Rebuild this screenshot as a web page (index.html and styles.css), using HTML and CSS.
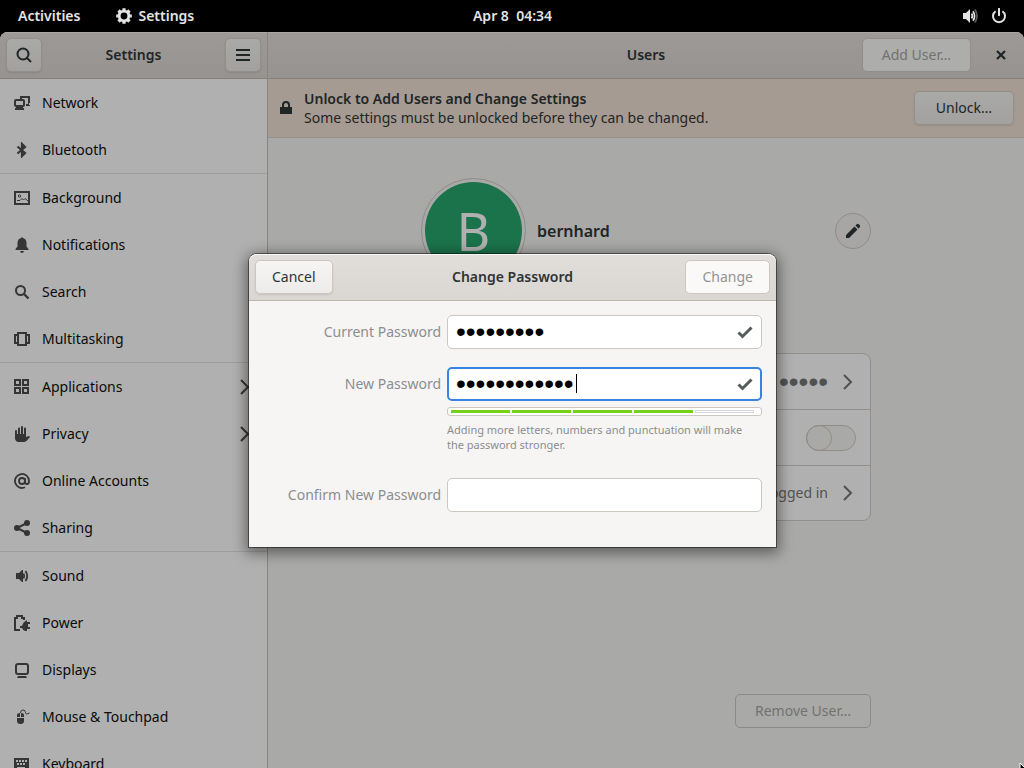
FILE: index.html
```html
<!DOCTYPE html>
<html lang="en">
<head>
<meta charset="utf-8">
<title>Settings – Users</title>
<link rel="stylesheet" href="styles.css">
</head>
<body>
<div class="topbar">
  <div class="topbar-side">
    <button class="shell-button">Activities</button>
    <button class="shell-button shell-app">
      <svg class="icon" viewBox="0 0 16 16"><g stroke="currentColor" stroke-width="3.2"><path d="M8 0.2v15.6M0.2 8h15.6M2.5 2.5l11 11M13.500 2.500l-11 11"/></g><circle cx="8" cy="8" r="6.200" fill="currentColor"/><circle cx="8" cy="8" r="3.400" fill="#000"/></svg>
      Settings
    </button>
  </div>
  <button class="shell-button clock">Apr 8&nbsp; 04:34</button>
  <div class="topbar-side topbar-status">
    <svg class="icon" viewBox="0 0 16 16"><path fill="currentColor" d="M1 5h3l4-4v14l-4-4H1z"/><g fill="none" stroke="currentColor" stroke-width="1.700"><path d="M9.600 5.500q1.600 2.500 0 5"/><path d="M11 3.200q3.200 4.800 0 9.600"/><path opacity=".4" d="M13 1.500q4 6.500 0 13"/></g></svg>
    <svg class="icon" viewBox="0 0 16 16"><g fill="none" stroke="currentColor" stroke-width="2"><path d="M4.600 3.200a6 6 0 1 0 6.800 0"/><path d="M8 .8v6.400" stroke-linecap="round"/></g></svg>
  </div>
</div>

<div class="window">
  <nav class="sidebar">
    <div class="headerbar sidebar-header">
      <button class="button icon-button" aria-label="Search"><svg class="icon" viewBox="0 0 16 16"><g fill="none" stroke="currentColor" stroke-width="2"><circle cx="7" cy="7" r="5.500"/><path d="M11 11l4 4"/></g></svg></button>
      <h1 class="title">Settings</h1>
      <button class="button icon-button" aria-label="Menu"><svg class="icon" viewBox="0 0 16 16"><path fill="currentColor" d="M1 2h14v2H1zM1 7h14v2H1zM1 12h14v2H1z"/></svg></button>
    </div>
    <div class="panels">
      <div class="group">
        <a class="panel" href="#"><svg class="icon" viewBox="0 0 16 16"><path fill="currentColor" d="M6 1h10v7h-1v2h1v1h-4V9h2V3H8v1H6zM2 4h7q2 0 2 2v4q0 2-2 2v1h1v2H1v-2h1v-1q-2 0-2-2V6q0-2 2-2zm0 2v4h7V6z"/></svg>Network</a>
        <a class="panel" href="#"><svg class="icon" viewBox="0 0 16 16"><path fill="none" stroke="currentColor" stroke-width="2.200" d="M3.500 4.500L11 11 8 14V2l3 3-7.500 6.500"/></svg>Bluetooth</a>
      </div>
      <div class="group">
        <a class="panel" href="#"><svg class="icon" viewBox="0 0 16 16"><path fill="none" stroke="currentColor" stroke-width="2" d="M1 2h14v12H1z"/><circle cx="5.500" cy="6" r="1.200" fill="none" stroke="currentColor"/><path fill="none" stroke="currentColor" d="M3 10.500h3l2-2 1.500 1.500L11 8.500l3 2.500"/></svg>Background</a>
        <a class="panel" href="#"><svg class="icon" viewBox="0 0 16 16"><path fill="currentColor" d="M7 1q1-1.500 2 0 3.500 1 3.500 5v3.500L14.500 12v1h-13v-1l2-2.500V6q0-4 3.500-5zM6 14h4q-.5 2-2 2t-2-2z"/></svg>Notifications</a>
        <a class="panel" href="#"><svg class="icon" viewBox="0 0 16 16"><g fill="none" stroke="currentColor" stroke-width="2"><circle cx="6.500" cy="6.500" r="4.500"/><path stroke-width="2.400" d="M10 10l4.500 4.500"/></g></svg>Search</a>
        <a class="panel" href="#"><svg class="icon" viewBox="0 0 16 16"><path fill="none" stroke="currentColor" stroke-width="2" d="M4 2h8v12H4zM3 4H1v8h2M13 4h2v8h-2"/></svg>Multitasking</a>
      </div>
      <div class="group">
        <a class="panel" href="#"><svg class="icon" viewBox="0 0 16 16"><path fill="none" stroke="currentColor" stroke-width="2" d="M1 1h5v5H1zM9 1h5v5H9zM1 9h5v5H1zM9 9h5v5H9z"/></svg>Applications<svg class="icon chevron" viewBox="0 0 16 16"><path d="M4 1l7 7-7 7"/></svg></a>
        <a class="panel" href="#"><svg class="icon" viewBox="0 0 16 16"><g stroke="currentColor" stroke-width="2" stroke-linecap="round"><path d="M2 5v7M5 2.500V10M8 1v9M11 2.500V10"/></g><path fill="currentColor" d="M1 8h11v3l3-1 1 1-3.500 4-2 1H4q-3-1-3-4z"/></svg>Privacy<svg class="icon chevron" viewBox="0 0 16 16"><path d="M4 1l7 7-7 7"/></svg></a>
        <a class="panel" href="#"><svg class="icon" viewBox="0 0 16 16"><g fill="none" stroke="currentColor" stroke-width="1.800"><circle cx="8" cy="8" r="3"/><path d="M11 5v4q0 2 2 2t2-3a7 7 0 1 0-4 6.300"/></g></svg>Online Accounts</a>
        <a class="panel" href="#"><svg class="icon" viewBox="0 0 16 16"><g fill="currentColor"><circle cx="3" cy="8" r="3"/><circle cx="13" cy="3" r="3"/><circle cx="13" cy="13" r="3"/></g><path fill="none" stroke="currentColor" stroke-width="2" d="M13 3L3 8l10 5"/></svg>Sharing</a>
      </div>
      <div class="group">
        <a class="panel" href="#"><svg class="icon" viewBox="0 0 16 16"><path fill="currentColor" d="M2 5h3l3-3h1v12H8l-3-3H2z"/><g fill="none" stroke="currentColor" stroke-width="1.800"><path d="M9.500 5.500q1.400 2.500 0 5"/><path d="M11.500 3q3.400 5 0 10"/></g></svg>Sound</a>
        <a class="panel" href="#"><svg class="icon" viewBox="0 0 16 16"><path fill="none" stroke="currentColor" stroke-width="2" d="M6 15H1V3h2V1h5v2h2v2"/><path fill="currentColor" d="M13 5v2h3v2h-2v3h2v2h-3v2h-2q-2-.5-3-3H6v-2h2q1-4 5-6z"/></svg>Power</a>
        <a class="panel" href="#"><svg class="icon" viewBox="0 0 16 16"><rect x="2" y="2" width="12" height="10" rx="2" fill="none" stroke="currentColor" stroke-width="2"/><path fill="currentColor" d="M4 14h8l1 2H3z"/></svg>Displays</a>
        <a class="panel" href="#"><svg class="icon" viewBox="0 0 16 16"><path fill="currentColor" d="M3 8V6q0-2 3-2v4zM7 4q3 0 3 2v2H7zM3 9h7v3q0 3-3.500 3T3 12z"/><path fill="none" stroke="currentColor" d="M6.500 4q0-3 2.500-3t2.500 2.500 4 .5"/></svg>Mouse &amp; Touchpad</a>
        <a class="panel" href="#"><svg class="icon" viewBox="0 0 16 16"><path fill="currentColor" fill-rule="evenodd" d="M0 2h15v12H0zM2 4v2h2V4zm3 0v2h2V4zm3 0v2h2V4zm3 0v2h2V4zM3 7v2h2V7zm3 0v2h2V7zm3 0v2h2V7zm-6 4v1h8v-1z"/></svg>Keyboard</a>
      </div>
    </div>
  </nav>

  <main class="main">
    <div class="headerbar main-header">
      <h1 class="title">Users</h1>
      <div class="header-end">
        <button class="button wide" disabled>Add User…</button>
        <button class="close" aria-label="Close"><svg class="icon" viewBox="0 0 16 16"><path fill="none" stroke="currentColor" stroke-width="2.200" d="M4 4l8 8M12 4l-8 8"/></svg></button>
      </div>
    </div>
    <div class="banner">
      <svg class="icon" viewBox="0 0 16 16"><path fill="currentColor" d="M2 7h12v7H2z"/><path fill="none" stroke="currentColor" stroke-width="2" d="M5 8V5q0-3 3-3t3 3v3"/></svg>
      <div class="banner-text">
        <strong>Unlock to Add Users and Change Settings</strong>
        <span>Some settings must be unlocked before they can be changed.</span>
      </div>
      <button class="button unlock">Unlock…</button>
    </div>
    <div class="content">
      <div class="user">
        <div class="avatar"><span class="avatar-disc">B</span></div>
        <h2 class="user-name">bernhard</h2>
        <button class="edit" aria-label="Edit name"><svg class="icon" viewBox="0 0 16 16"><path fill="currentColor" d="M1 12l8.500-8.500 3 3L4 15H1zM10.500 2.500L12 1q1-.6 2 .4l.6.600q1 1 .4 2L13.500 5.500z"/></svg></button>
      </div>
      <div class="card">
        <button class="row" aria-label="Password"><span class="dots">•••••</span><svg class="icon chevron" viewBox="0 0 16 16"><path d="M4 1l7 7-7 7"/></svg></button>
        <div class="row"><input class="switch" type="checkbox" aria-label="Automatic login"></div>
        <button class="row" aria-label="Account activity"><span>Logged in</span><svg class="icon chevron" viewBox="0 0 16 16"><path d="M4 1l7 7-7 7"/></svg></button>
      </div>
      <button class="button wide remove" disabled>Remove User…</button>
    </div>
  </main>

  <div class="overlay">
    <form class="dialog" role="dialog" aria-labelledby="dialog-title">
      <div class="dialog-header">
        <button class="button" type="button">Cancel</button>
        <h2 class="title" id="dialog-title">Change Password</h2>
        <button class="button" disabled>Change</button>
      </div>
      <div class="dialog-body">
        <label for="current">Current Password</label>
        <div class="field">
          <input class="entry" id="current" type="password" value="ninechars">
          <svg class="icon check" viewBox="0 0 16 16"><path d="M1.500 8.500l4 4L14.500 3.500"/></svg>
        </div>
        <label for="new">New Password</label>
        <div class="new-password">
          <div class="field">
            <input class="entry active" id="new" type="password" value="twelve-chars">
            <span class="caret"></span>
            <svg class="icon check" viewBox="0 0 16 16"><path d="M1.500 8.500l4 4L14.500 3.500"/></svg>
          </div>
          <div class="strength" role="meter" aria-label="Password strength" aria-valuemin="0" aria-valuemax="5" aria-valuenow="4">
            <i class="on"></i><i class="on"></i><i class="on"></i><i class="on"></i><i></i>
          </div>
          <p class="hint">Adding more letters, numbers and punctuation will make<br>the password stronger.</p>
        </div>
        <label for="confirm">Confirm New Password</label>
        <div class="field"><input class="entry" id="confirm" type="password"></div>
      </div>
    </form>
  </div>
</div>
<svg class="pointer" viewBox="0 0 12 18"><path d="M1 1v14l3-3 2 5 3-1-2-5h4z" fill="#000" stroke="#fff"/></svg>
</body>
</html>
```
FILE: styles.css
```css
*, *::before { box-sizing: border-box; }

body {
  margin: 0;
  height: 100vh;
  overflow: hidden;
  display: flex;
  flex-direction: column;
  background: #000;
  color: #202526;
  font: 14px/20px "Noto Sans", sans-serif;
}

button, input { font: inherit; color: inherit; }
h1, h2, p { margin: 0; }
.icon { width: 16px; height: 16px; flex: none; display: block; }
.title { font-size: 14px; font-weight: 600; text-align: center; }

/* Shell bar */
.topbar {
  height: 32px;
  flex: none;
  display: grid;
  grid-template-columns: 1fr auto 1fr;
  align-items: center;
  padding: 0 17px 0 18px;
  color: #e4e4e4;
}
.topbar-side { display: flex; align-items: center; gap: 36px; }
.topbar-status { justify-content: flex-end; gap: 13px; }
.shell-button {
  display: flex;
  align-items: center;
  gap: 6px;
  border: 0;
  padding: 0;
  background: none;
  font-weight: 600;
}

/* Window */
.window {
  position: relative;
  flex: 1;
  min-height: 0;
  display: flex;
  border-radius: 8px 8px 0 0;
  overflow: hidden;
  background: #a9a9a7;
}
.headerbar {
  height: 47px;
  flex: none;
  padding: 0 6px;
  background: linear-gradient(#9d9996, #979390);
  border-bottom: 1px solid #84807c;
  box-shadow: inset 0 1px #aaa8a6;
}
.button {
  height: 34px;
  padding: 0 16px;
  border: 1px solid #928e8a;
  border-radius: 5px;
  background: linear-gradient(#a9a9a7, #a2a1a0);
  box-shadow: 0 1px 2px rgba(0, 0, 0, .1);
  white-space: nowrap;
}
.button:disabled {
  background: #adadab;
  border-color: #918d89;
  color: #717372;
  box-shadow: none;
}
.button.wide { padding: 0 19px; }
.icon-button { width: 36px; padding: 0; display: grid; place-items: center; }

.sidebar {
  width: 268px;
  flex: none;
  display: flex;
  flex-direction: column;
  border-right: 1px solid #888582;
  background: #b0b0b0;
}
.sidebar-header { display: flex; align-items: center; justify-content: space-between; }
.panels { flex: 1; min-height: 0; overflow: hidden; }
.group + .group { border-top: 1px solid #9d9d9d; }
.panel {
  height: 47px;
  padding: 0 14px;
  display: flex;
  align-items: center;
  gap: 12px;
  color: #0a0a0a;
  text-decoration: none;
}
.panel .icon { color: #353535; }
.chevron { fill: none; stroke: currentColor; stroke-width: 2; }
.panel .chevron { margin-left: auto; }

.main { flex: 1; min-width: 0; display: flex; flex-direction: column; }
.main-header { display: grid; grid-template-columns: 1fr auto 1fr; align-items: center; }
.main-header .title { grid-column: 2; }
.header-end { display: flex; justify-content: flex-end; align-items: center; gap: 13px; }
.close { width: 34px; height: 34px; border: 0; padding: 0 9px; background: none; }

.banner {
  display: flex;
  align-items: center;
  gap: 10px;
  height: 59px;
  flex: none;
  padding: 0 10px;
  background: #a69b92;
  border-bottom: 1px solid #97918c;
}
.banner-text { flex: 1; display: flex; flex-direction: column; line-height: 19px; }
.banner-text strong { font-weight: 600; }
.button.unlock { padding: 0 21px; }

.content {
  flex: 1;
  width: 450px;
  max-width: 100%;
  margin: 0 auto;
  padding: 40px 0;
  display: flex;
  flex-direction: column;
}
.user { display: flex; align-items: center; gap: 11px; }
.avatar {
  width: 105px;
  height: 105px;
  padding: 3px;
  border: 1px solid #8f8b87;
  border-radius: 50%;
}
.avatar-disc {
  height: 100%;
  display: grid;
  place-items: center;
  border-radius: 50%;
  background: #1b734b;
  color: #b0b0b0;
  font-size: 52px;
}
.user-name { flex: 1; font-size: 16px; font-weight: 600; }
.edit {
  width: 36px;
  height: 36px;
  padding: 0 9px;
  border: 1px solid #8f8b87;
  border-radius: 50%;
  background: #a7a6a5;
}
.card {
  margin-top: 70px;
  border: 1px solid #928f8c;
  border-radius: 8px;
  background: #b0b0b0;
  color: #505252;
}
.row {
  width: 100%;
  height: 55px;
  padding: 0 14px;
  display: flex;
  align-items: center;
  justify-content: flex-end;
  gap: 12px;
  border: 0;
  background: none;
}
.row + .row { height: 56px; border-top: 1px solid #928f8c; }
.row:last-child { height: 55px; }
.dots { font-family: "Liberation Sans", sans-serif; font-size: 28px; }
.switch {
  appearance: none;
  display: flex;
  width: 50px;
  height: 26px;
  margin: 0;
  border: 1px solid #928c87;
  border-radius: 13px;
  background: #a9a9a7;
}
.switch::before {
  content: "";
  width: 26px;
  height: 26px;
  margin: -1px;
  border: 1px solid #928c87;
  border-radius: 50%;
}
.remove { margin-top: auto; align-self: flex-end; }
.remove:disabled { background: none; border-color: #8a8a88; }

/* Password dialog */
.overlay {
  position: absolute;
  inset: 0 0 0 1px;
  display: grid;
  place-items: center;
}
.dialog {
  width: 527px;
  max-width: 100%;
  border-radius: 8px 8px 0 0;
  background: #f6f5f4;
  color: #2e3436;
  box-shadow: 0 0 0 1px rgba(0, 0, 0, .45), 0 3px 14px 3px rgba(0, 0, 0, .45);
}
.dialog-header {
  height: 47px;
  padding: 0 6px;
  display: grid;
  grid-template-columns: 1fr auto 1fr;
  align-items: center;
  justify-items: start;
  border-bottom: 1px solid #bfb8b1;
  border-radius: 8px 8px 0 0;
  background: linear-gradient(#e1dedb, #dad6d2);
  box-shadow: inset 0 1px #f8f7f6;
}
.dialog-header .button {
  border-color: #cdc7c2;
  background: linear-gradient(#f6f5f4, #edebe9);
}
.dialog-header .button:disabled {
  justify-self: end;
  background: #faf9f8;
  color: #929595;
}
.dialog-body {
  display: grid;
  grid-template-columns: 1fr 315px;
  gap: 18px 6px;
  padding: 14px 14px 35px;
}
.dialog-body label { line-height: 34px; text-align: right; color: #8b8e8f; }
.field { position: relative; }
.entry {
  display: block;
  width: 100%;
  height: 34px;
  padding: 0 32px 0 8px;
  border: 1px solid #cdc7c2;
  border-radius: 5px;
  outline: 0;
  background: #fff;
  color: #000;
  font: 28px/20px "Liberation Sans", sans-serif;
}
.entry.active { border: 2px solid #3584e4; padding-left: 7px; }
.caret {
  position: absolute;
  left: 129px;
  top: 7px;
  width: 1px;
  height: 19px;
  background: #000;
}
.check {
  position: absolute;
  right: 9px;
  top: 9px;
  fill: none;
  stroke: #565b5c;
  stroke-width: 3;
}
.strength {
  display: flex;
  gap: 2px;
  height: 9px;
  margin-top: 6px;
  padding: 2px 7px 2px 3px;
  border: 1px solid #cdc7c2;
  border-radius: 3px;
  background: #fff;
}
.strength i { flex: 1; box-shadow: inset 0 0 0 1px #d5d5d8; }
.strength .on { box-shadow: none; background: #73d216; }
.hint {
  margin: 6px 0 8px;
  font-size: 11px;
  line-height: 15px;
  color: #8b8e8f;
}

.pointer {
  position: absolute;
  left: 1019px;
  top: 762px;
  width: 12px;
  height: 18px;
}
```
